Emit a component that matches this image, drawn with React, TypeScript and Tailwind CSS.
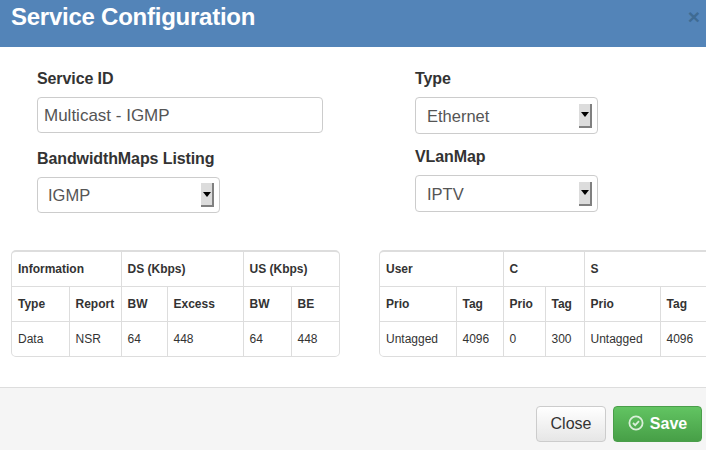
import React from 'react';

const font = { fontFamily: '"Liberation Sans", Arial, sans-serif' };

const SelectBox = ({ value, className, textClass }: { value: string; className?: string; textClass?: string }) => (
  <div className={`flex w-[183px] h-[37px] items-center justify-between rounded-[4px] border border-[#ccc] bg-white pl-[11px] pr-[5px] text-[16.5px] text-[#555] ${className || ''}`}>
    <span className={textClass || 'mt-[2px]'}>{value}</span>
    <span className="flex h-[24px] w-[13px] items-center justify-center border-r-2 border-b-2 border-[#808080] bg-[#dcdcdc]">
      <svg width="8" height="5" viewBox="0 0 8 5"><path d="M0 0h8L4 5z" fill="#000" /></svg>
    </span>
  </div>
);

const th = 'border border-[#ddd] px-[6px] text-left align-middle font-bold';
const td = 'border border-[#ddd] px-[6px] text-left align-middle font-normal';
const label = 'block text-[16px] font-bold leading-[23px] tracking-[-0.1px] text-[#333]';

export default function App() {
  return (
    <div className="relative h-[450px] w-[706px] overflow-hidden bg-white" style={font}>
      <div className="flex h-[47px] items-start justify-between bg-[#5384b8] pl-[11px] pr-[6px]">
        <h3 className="text-[24px] font-bold leading-[34px] tracking-[-0.25px] text-white">Service Configuration</h3>
        <span className="text-[21px] font-bold leading-[34px] text-[#3f6b93]">×</span>
      </div>

      <div className="flex h-[203px] pl-[37px] pt-[20px]">
        <div className="w-[378px]">
          <label className={label}>Service ID</label>
          <div className="mt-[7px] flex h-[36px] w-[286px] items-center rounded-[4px] border border-[#ccc] bg-white px-[6px] text-[17px] text-[#555]">
            <span className="mt-[1px]">Multicast - IGMP</span>
          </div>
          <label className={`mt-[14px] ${label}`}>BandwidthMaps Listing</label>
          <SelectBox value="IGMP" className="mt-[7px] !h-[36px] !pl-[10px]" textClass="mt-0" />
        </div>
        <div>
          <label className={label}>Type</label>
          <SelectBox value="Ethernet" className="mt-[7px]" />
          <label className={`mt-[11px] ${label}`}>VLanMap</label>
          <SelectBox value="IPTV" className="mt-[7px]" />
        </div>
      </div>

      <div className="flex pl-[11px]">
        <div className="w-[329px] shrink-0 overflow-hidden rounded-[5px] border border-t-2 border-[#ddd]">
          <table className="w-full table-fixed border-collapse border-hidden text-[12px] text-[#333]">
            <colgroup>
              <col className="w-[57px]" /><col className="w-[52px]" /><col className="w-[46px]" /><col className="w-[76px]" /><col className="w-[48px]" /><col />
            </colgroup>
            <tbody>
              <tr className="h-[34px]">
                <th colSpan={2} className={th}>Information</th>
                <th colSpan={2} className={th}>DS (Kbps)</th>
                <th colSpan={2} className={th}>US (Kbps)</th>
              </tr>
              <tr className="h-[35px]">
                {['Type', 'Report', 'BW', 'Excess', 'BW', 'BE'].map((h, i) => <th key={i} className={th}>{h}</th>)}
              </tr>
              <tr className="h-[35px]">
                {['Data', 'NSR', '64', '448', '64', '448'].map((c, i) => <td key={i} className={td}>{c}</td>)}
              </tr>
            </tbody>
          </table>
        </div>

        <div className="ml-[39px] w-[332px] shrink-0 overflow-hidden rounded-[5px] border border-t-2 border-[#ddd]">
          <table className="w-full table-fixed border-collapse border-hidden text-[12px] text-[#333]">
            <colgroup>
              <col className="w-[76px]" /><col className="w-[47px]" /><col className="w-[42px]" /><col className="w-[39px]" /><col className="w-[76px]" /><col />
            </colgroup>
            <tbody>
              <tr className="h-[34px]">
                <th colSpan={2} className={th}>User</th>
                <th colSpan={2} className={th}>C</th>
                <th colSpan={2} className={th}>S</th>
              </tr>
              <tr className="h-[35px]">
                {['Prio', 'Tag', 'Prio', 'Tag', 'Prio', 'Tag'].map((h, i) => <th key={i} className={th}>{h}</th>)}
              </tr>
              <tr className="h-[35px]">
                {['Untagged', '4096', '0', '300', 'Untagged', '4096'].map((c, i) => <td key={i} className={td}>{c}</td>)}
              </tr>
            </tbody>
          </table>
        </div>
      </div>

      <div className="absolute bottom-0 left-0 right-0 flex h-[63px] items-start justify-end gap-[7px] border-t border-[#ddd] bg-[#f5f5f5] pr-[4px] pt-[18px]">
        <button className="h-[36px] w-[70px] rounded-[4px] border border-[#ccc] bg-gradient-to-b from-white to-[#e6e6e6] text-[16px] text-[#333]">Close</button>
        <button className="flex h-[36px] w-[89px] items-center justify-center gap-[6px] rounded-[4px] border border-[#4a9e4a] bg-gradient-to-b from-[#62c462] to-[#479f47] text-[16px] font-bold text-white">
          <svg width="16" height="16" viewBox="0 0 16 16" fill="none" stroke="#d9efd9" strokeWidth="1.8" className="-mt-[2px]">
            <circle cx="8" cy="8" r="6.6" />
            <path d="M5 8l2.2 2.2L11 6.2" />
          </svg>
          Save
        </button>
      </div>
    </div>
  );
}
